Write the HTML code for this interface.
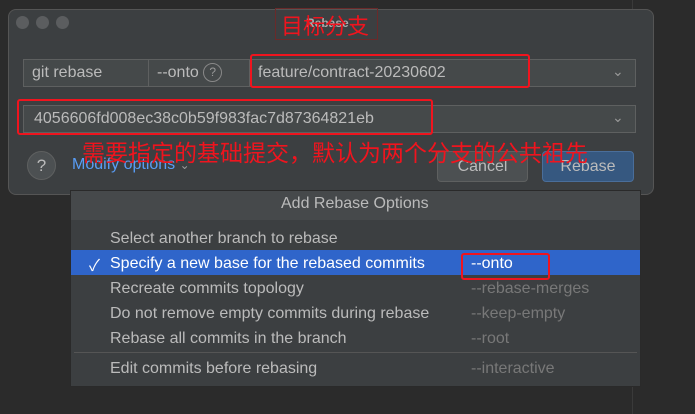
<html><head><style>
body{margin:0;width:695px;height:414px;background:#2b2b2b;position:relative;overflow:hidden;font-family:"Liberation Sans","Noto Sans CJK SC",sans-serif;}
.a{position:absolute}
.dlg{left:8px;top:9px;width:644px;height:184px;background:#3c3f41;border-radius:8px;border:1px solid #555}
.dot{width:13px;height:13px;border-radius:50%;background:#5b5d5f;top:16px}
.box{border:1px solid #5e6060;background:#45494a;color:#bbb;font-size:16px;box-sizing:border-box;line-height:26px;padding-left:8px}
.red{border:2px solid #f0141e;border-radius:3px;box-sizing:border-box}
.btn{border:1px solid #5e6060;border-radius:4px;box-sizing:border-box;background:#4c5052;color:#bbb;font-size:16px;text-align:center;line-height:29px}
.pop{left:70px;top:190px;width:569px;height:195px;background:#3c3f41;border:1px solid #2a2a2a}
.it{font-size:16px;color:#bbb;white-space:nowrap}
.op{font-size:16px;color:#787878;white-space:nowrap}
.chev{color:#999;font-size:14px}
</style></head><body>
<div class="a" style="left:632px;top:0;width:1px;height:414px;background:#3a3a3a"></div>
<div class="a dlg"></div>
<div class="a dot" style="left:16px"></div><div class="a dot" style="left:36px"></div><div class="a dot" style="left:56px"></div>
<div class="a" style="left:306px;top:16px;font-size:12px;color:#aaa;font-weight:bold">Rebase</div>
<div class="a" style="left:275px;top:8px;width:103px;height:32px;border:1px solid #6a2a2a;box-sizing:border-box"></div>
<div class="a" style="left:281px;top:9px;font-size:22px;color:#f0141e">目标分支</div>
<div class="a box" style="left:23px;top:59px;width:126px;height:28px">git rebase</div>
<div class="a box" style="left:148px;top:59px;width:102px;height:28px">--onto <span style="display:inline-block;width:17px;height:17px;border:1px solid #888;border-radius:50%;font-size:12px;line-height:17px;text-align:center;color:#999;vertical-align:middle">?</span></div>
<div class="a box" style="left:249px;top:59px;width:387px;height:28px">feature/contract-20230602</div>
<div class="a chev" style="left:612px;top:63px">&#8964;</div>
<div class="a red" style="left:250px;top:54px;width:280px;height:34px"></div>
<div class="a box" style="left:23px;top:105px;width:613px;height:28px;padding-left:10px">4056606fd008ec38c0b59f983fac7d87364821eb</div>
<div class="a chev" style="left:612px;top:109px">&#8964;</div>
<div class="a red" style="left:17px;top:99px;width:416px;height:36px"></div>
<div class="a" style="left:27px;top:151px;width:29px;height:29px;border-radius:50%;background:#4c5052;border:1px solid #5e6060;box-sizing:border-box;color:#bbb;text-align:center;line-height:27px;font-size:17px">?</div>
<div class="a" style="left:72px;top:156px;color:#589df6;font-size:16px">Modify options <span style="color:#999;font-size:12px">&#8964;</span></div>
<div class="a btn" style="left:437px;top:151px;width:91px;height:31px">Cancel</div>
<div class="a btn" style="left:542px;top:151px;width:92px;height:31px;background:#365880;border-color:#4a6e9a">Rebase</div>
<div class="a" style="left:82px;top:134px;font-size:23px;color:#f0141e;white-space:nowrap">需要指定的基础提交，默认为两个分支的公共祖先</div>
<div class="a pop"></div>
<div class="a" style="left:71px;top:191px;width:569px;height:29px;background:#46494b"></div>
<div class="a" style="left:281px;top:195px;font-size:16px;color:#bbb">Add Rebase Options</div>
<div class="a" style="left:71px;top:250px;width:569px;height:25px;background:#2f65ca"></div>
<div class="a" style="left:74px;top:352px;width:563px;height:1px;background:#555"></div>
<div class="a it" style="left:110px;top:230px">Select another branch to rebase</div>
<div class="a it" style="left:89px;top:252px;color:#fff">✓</div>
<div class="a it" style="left:110px;top:255px;color:#fff">Specify a new base for the rebased commits</div>
<div class="a op" style="left:471px;top:255px;color:#fff">--onto</div>
<div class="a red" style="left:461px;top:253px;width:89px;height:27px"></div>
<div class="a it" style="left:110px;top:280px">Recreate commits topology</div>
<div class="a op" style="left:471px;top:280px">--rebase-merges</div>
<div class="a it" style="left:110px;top:305px">Do not remove empty commits during rebase</div>
<div class="a op" style="left:471px;top:305px">--keep-empty</div>
<div class="a it" style="left:110px;top:330px">Rebase all commits in the branch</div>
<div class="a op" style="left:471px;top:330px">--root</div>
<div class="a it" style="left:110px;top:360px">Edit commits before rebasing</div>
<div class="a op" style="left:471px;top:360px">--interactive</div>
</body></html>
